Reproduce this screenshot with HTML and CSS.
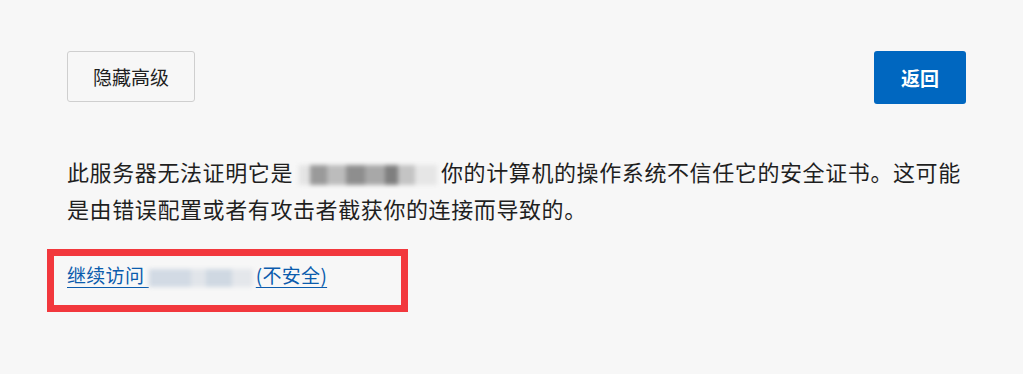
FILE: index.html
```html
<!DOCTYPE html>
<html lang="zh-CN">

<head>
    <meta charset="UTF-8">
    <title>隐私错误</title>
    <link rel="stylesheet" href="styles.css">
</head>

<body>
    <div class="container">
        <div class="button-row">
            <button class="button-secondary">隐藏高级</button>
            <button class="button-primary">返回</button>
        </div>
        <p class="details">此服务器无法证明它是<span class="masked masked-dark"></span>你的计算机的操作系统不信任它的安全证书。这可能是由错误配置或者有攻击者截获你的连接而导致的。</p>
        <div class="proceed">
            <a class="proceed-link" href="#">继续访问 <span class="masked masked-link"></span>(不安全)</a>
        </div>
    </div>
</body>

</html>
```

FILE: styles.css
```css
html,
body {
    min-height: 100%;
}

body {
    margin: 0;
    padding: 0;
    background-color: #f7f7f7;
    font-family: "Noto Sans CJK SC", "Noto Sans", sans-serif;
    color: #1f1f1f;
}

.container {
    width: 899px;
    margin: 0 0 0 67px;
    padding: 51px 0 60px;
}

.button-row {
    display: flex;
    justify-content: space-between;
    align-items: flex-start;
}

.button-secondary {
    width: 128px;
    height: 51px;
    font-family: inherit;
    font-size: 19px;
    color: #1f1f1f;
    background-color: #f7f7f7;
    border: 1px solid #cfcfcf;
    border-radius: 3px;
}

.button-primary {
    width: 92px;
    height: 53px;
    font-family: inherit;
    font-size: 19px;
    font-weight: bold;
    color: white;
    background-color: #0067c0;
    border: none;
    border-radius: 3px;
}

.details {
    margin: 49px 0 0;
    font-size: 22px;
    line-height: 37px;
    letter-spacing: 0.6px;
}

.masked {
    display: inline-block;
    vertical-align: middle;
    filter: blur(2px);
}

.masked-dark {
    width: 138px;
    height: 20px;
    margin: 0 4px 0 6px;
    background: linear-gradient(90deg, #e4e4e4 0 8%, #9a9a9a 8% 20%, #bcbcbc 20% 34%, #8e8e8e 34% 48%, #a8a8a8 48% 62%, #7f7f7f 62% 72%, #c4c4c4 72% 84%, #e6e6e6 84%);
}

.masked-link {
    width: 104px;
    height: 18px;
    margin-right: 3px;
    background: linear-gradient(90deg, #d2dae4 0 40%, #e1e5ea 40% 55%, #cfd8e2 55% 80%, #e4e7eb 80%);
}

/* red annotation frame around the proceed link */
.proceed {
    width: 321px;
    margin: 22px 0 0 -20px;
    padding: 5px 13px 15px;
    border: 7px solid #f2383d;
    line-height: 28px;
}

.proceed-link {
    font-size: 19px;
    letter-spacing: 0.3px;
    color: #0b5cad;
    text-decoration: underline;
    text-underline-offset: 4px;
    text-decoration-thickness: 1px;
}
```
